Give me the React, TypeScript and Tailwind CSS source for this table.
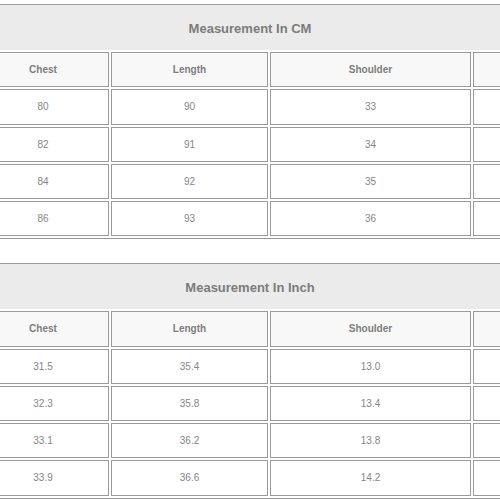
type SizeTable = { title: string; rows: string[][] };

const COLUMNS = ['Chest', 'Length', 'Shoulder', ''];

const TABLES: SizeTable[] = [
  {
    title: 'Measurement In CM',
    rows: [
      ['80', '90', '33', ''],
      ['82', '91', '34', ''],
      ['84', '92', '35', ''],
      ['86', '93', '36', ''],
    ],
  },
  {
    title: 'Measurement In Inch',
    rows: [
      ['31.5', '35.4', '13.0', ''],
      ['32.3', '35.8', '13.4', ''],
      ['33.1', '36.2', '13.8', ''],
      ['33.9', '36.6', '14.2', ''],
    ],
  },
];

const SizeChart = ({ table }: { table: SizeTable }) => (
  <div className="w-[552px] shrink-0 border border-[#9a9a9a] bg-white">
    <div className="h-[45px] flex items-center justify-center bg-[#ebebeb] pt-[2px] text-[13px] font-bold text-[#7b7b7b]">
      {table.title}
    </div>
    <table className="w-full table-fixed border-separate border-spacing-[2px]">
      <colgroup>
        <col className="w-[132px]" />
        <col className="w-[157px]" />
        <col className="w-[201px]" />
        <col />
      </colgroup>
      <thead>
        <tr>
          {COLUMNS.map((col, i) => (
            <th
              key={i}
              className="h-[35.25px] p-0 border border-[#9a9a9a] bg-[#f8f8f8] text-center align-middle text-[10px] font-bold text-[#7d7d7d]"
            >
              {col}
            </th>
          ))}
        </tr>
      </thead>
      <tbody>
        {table.rows.map((row, r) => (
          <tr key={r}>
            {row.map((cell, c) => (
              <td
                key={c}
                className="h-[35.25px] p-0 border border-[#9a9a9a] bg-white text-center align-middle text-[10px] text-[#858585]"
              >
                {cell}
              </td>
            ))}
          </tr>
        ))}
      </tbody>
    </table>
  </div>
);

const App = () => {
  return (
    <div className="w-[500px] h-[500px] overflow-hidden bg-white pt-[4px] font-['Liberation_Sans',Arial,sans-serif]">
      <div className="flex justify-center">
        <SizeChart table={TABLES[0]} />
      </div>
      <div className="flex justify-center mt-[24px]">
        <SizeChart table={TABLES[1]} />
      </div>
    </div>
  );
};

export default App;
